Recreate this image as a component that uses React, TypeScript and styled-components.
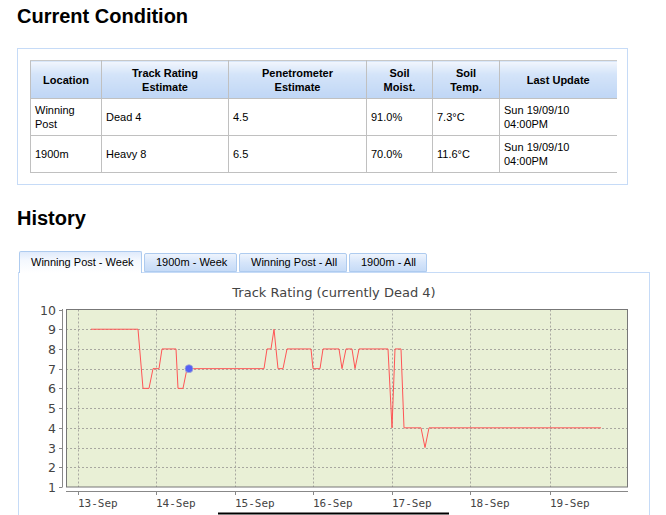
import styled, { createGlobalStyle } from "styled-components";

const GlobalStyle = createGlobalStyle`
  body {
    margin: 0;
    font-family: "Liberation Sans", Arial, sans-serif;
    background: #fff;
    color: #000;
  }
`;

const Page = styled.div`
  padding: 0 17px;
  width: 666px;
  box-sizing: border-box;
  overflow: hidden;
`;

const Heading = styled.h1<{ $top: number }>`
  margin: ${(p) => p.$top}px 0 0;
  font-size: 20px;
  line-height: 24px;
  font-weight: bold;
`;

const Box = styled.div`
  margin-top: 20px;
  width: 611px;
  box-sizing: border-box;
  border: 1px solid #c6dbf7;
  padding: 11px 11px 11px 12px;
`;

const Table = styled.table`
  border-collapse: collapse;
  table-layout: fixed;
  width: 586px;
  font-size: 11px;
  line-height: 14px;
`;

const Th = styled.th<{ $w: number }>`
  box-sizing: border-box;
  width: ${(p) => p.$w}px;
  height: 38px;
  padding: 0 4px;
  border: 1px solid #c0c0c0;
  border-top-color: #c8c8c8;
  background: linear-gradient(#f2f6fd 0%, #d4e4f9 35%, #bfd6f5 100%);
  font-weight: bold;
  text-align: center;
  white-space: pre-line;
  &:last-child {
    border-right: none;
  }
`;

const Td = styled.td`
  height: 36px;
  padding: 0 4px;
  border: 1px solid #c0c0c0;
  vertical-align: middle;
  &:last-child {
    border-right: none;
  }
`;

const Tabs = styled.div`
  margin: 20px 0 0 2px;
  display: flex;
  align-items: flex-end;
  gap: 2px;
  height: 22px;
`;

const Tab = styled.div<{ $w: number; $active?: boolean }>`
  width: ${(p) => p.$w}px;
  height: ${(p) => (p.$active ? 22 : 19)}px;
  box-sizing: border-box;
  padding-left: 11px;
  border: 1px solid #aecbef;
  border-bottom: ${(p) => (p.$active ? "none" : "1px solid #aecbef")};
  border-radius: 2px 2px 0 0;
  background: ${(p) =>
    p.$active
      ? "linear-gradient(#dfeafb 0%, #f4f8fe 40%, #ffffff 100%)"
      : "linear-gradient(#eef4fd 0%, #d6e5fa 50%, #c6dbf7 100%)"};
  font-size: 11px;
  line-height: ${(p) => (p.$active ? 21 : 17)}px;
  white-space: nowrap;
  overflow: hidden;
  position: relative;
  z-index: ${(p) => (p.$active ? 1 : 0)};
  margin-bottom: ${(p) => (p.$active ? -1 : 0)}px;
`;

const Panel = styled.div`
  margin-left: 1px;
  width: 632px;
  height: 260px;
  box-sizing: border-box;
  border: 1px solid #c6dbf7;
  background: #fff;
`;

const ChartSvg = styled.svg`
  display: block;
  font-family: "DejaVu Sans", sans-serif;
`;

const columns = [
  { label: "Location", w: 71 },
  { label: "Track Rating\nEstimate", w: 127 },
  { label: "Penetrometer\nEstimate", w: 138 },
  { label: "Soil\nMoist.", w: 66 },
  { label: "Soil\nTemp.", w: 67 },
  { label: "Last Update", w: 117 },
];

const rows = [
  ["Winning Post", "Dead 4", "4.5", "91.0%", "7.3°C", "Sun 19/09/10 04:00PM"],
  ["1900m", "Heavy 8", "6.5", "70.0%", "11.6°C", "Sun 19/09/10 04:00PM"],
];

const tabs = [
  { label: "Winning Post - Week", w: 123 },
  { label: "1900m - Week", w: 93 },
  { label: "Winning Post - All", w: 108 },
  { label: "1900m - All", w: 78 },
];

// plot geometry in page coordinates
const PLOT = { left: 66, right: 628, top: 309.5, bottom: 487 };
const unit = (PLOT.bottom - PLOT.top) / 9;
const yOf = (v: number) => PLOT.bottom - (v - 1) * unit;
const dayTicks = [78, 156, 235, 313, 392, 470, 550];
const dayLabels = ["13-Sep", "14-Sep", "15-Sep", "16-Sep", "17-Sep", "18-Sep", "19-Sep"];

const series: [number, number][] = [
  [91, 9], [138, 9], [143, 6], [149, 6], [153, 7], [159, 7], [162, 8], [176, 8],
  [178, 6], [183, 6], [187, 7], [264, 7], [267, 8], [271, 8], [274, 9], [278, 7],
  [283, 7], [287, 8], [311, 8], [313, 7], [320, 7], [323, 8], [339, 8], [342, 7],
  [346, 8], [352, 8], [355, 7], [359, 8], [388, 8], [392, 4], [395, 8], [401, 8],
  [404, 4], [421, 4], [425, 3], [429, 4], [601, 4],
];

function Chart() {
  const values = [1, 2, 3, 4, 5, 6, 7, 8, 9, 10];
  return (
    <ChartSvg width={630} height={242} viewBox="19 273 630 242">
      <text x={334} y={297} textAnchor="middle" fontSize={13} fill="#444">
        Track Rating (currently Dead 4)
      </text>
      <rect
        x={PLOT.left}
        y={PLOT.top}
        width={PLOT.right - PLOT.left}
        height={PLOT.bottom - PLOT.top}
        fill="#e9f0d6"
      />
      {values.slice(1, 9).map((v) => (
        <line
          key={v}
          x1={PLOT.left}
          x2={PLOT.right}
          y1={Math.round(yOf(v)) + 0.5}
          y2={Math.round(yOf(v)) + 0.5}
          stroke="#a8a8a0"
          strokeDasharray="2,2"
        />
      ))}
      {dayTicks.map((x) => (
        <line
          key={x}
          x1={x + 0.5}
          x2={x + 0.5}
          y1={PLOT.top}
          y2={PLOT.bottom}
          stroke="#a8a8a0"
          strokeDasharray="2,2"
        />
      ))}
      <rect
        x={PLOT.left + 0.5}
        y={PLOT.top}
        width={PLOT.right - PLOT.left - 1}
        height={PLOT.bottom - PLOT.top}
        fill="none"
        stroke="#777"
      />
      <line x1={62.5} x2={62.5} y1={309} y2={487.5} stroke="#888" />
      {values.map((v) => (
        <g key={v}>
          <line x1={59} x2={62} y1={Math.round(yOf(v)) + 0.5} y2={Math.round(yOf(v)) + 0.5} stroke="#888" />
          <text x={56} y={yOf(v) + 5} textAnchor="end" fontSize={12.5} fill="#444">
            {v}
          </text>
        </g>
      ))}
      <line x1={PLOT.left} x2={PLOT.right} y1={491.5} y2={491.5} stroke="#888" />
      {dayTicks.map((x, i) => (
        <g key={x}>
          <line x1={x + 0.5} x2={x + 0.5} y1={492} y2={495} stroke="#888" />
          <text
            x={x}
            y={507}
            fontSize={11}
            fill="#444"
            fontFamily="'DejaVu Sans Mono', monospace"
          >
            {dayLabels[i]}
          </text>
        </g>
      ))}
      <polyline
        points={series.map(([x, v]) => `${x},${yOf(v)}`).join(" ")}
        fill="none"
        stroke="#ff5555"
        strokeWidth={1}
      />
      <circle cx={189} cy={yOf(7)} r={4} fill="#5560f5" stroke="#aab0d0" strokeWidth={0.8} />
      <rect x={218} y={512.5} width={231} height={2} fill="#000" />
    </ChartSvg>
  );
}

export default function App() {
  return (
    <Page>
      <GlobalStyle />
      <Heading $top={4}>Current Condition</Heading>
      <Box>
        <Table>
          <thead>
            <tr>
              {columns.map((c) => (
                <Th key={c.label} $w={c.w}>
                  {c.label}
                </Th>
              ))}
            </tr>
          </thead>
          <tbody>
            {rows.map((r) => (
              <tr key={r[0]}>
                {r.map((cell, i) => (
                  <Td key={i}>{cell}</Td>
                ))}
              </tr>
            ))}
          </tbody>
        </Table>
      </Box>
      <Heading $top={21}>History</Heading>
      <Tabs>
        {tabs.map((t, i) => (
          <Tab key={t.label} $w={t.w} $active={i === 0}>
            {t.label}
          </Tab>
        ))}
      </Tabs>
      <Panel>
        <Chart />
      </Panel>
    </Page>
  );
}
